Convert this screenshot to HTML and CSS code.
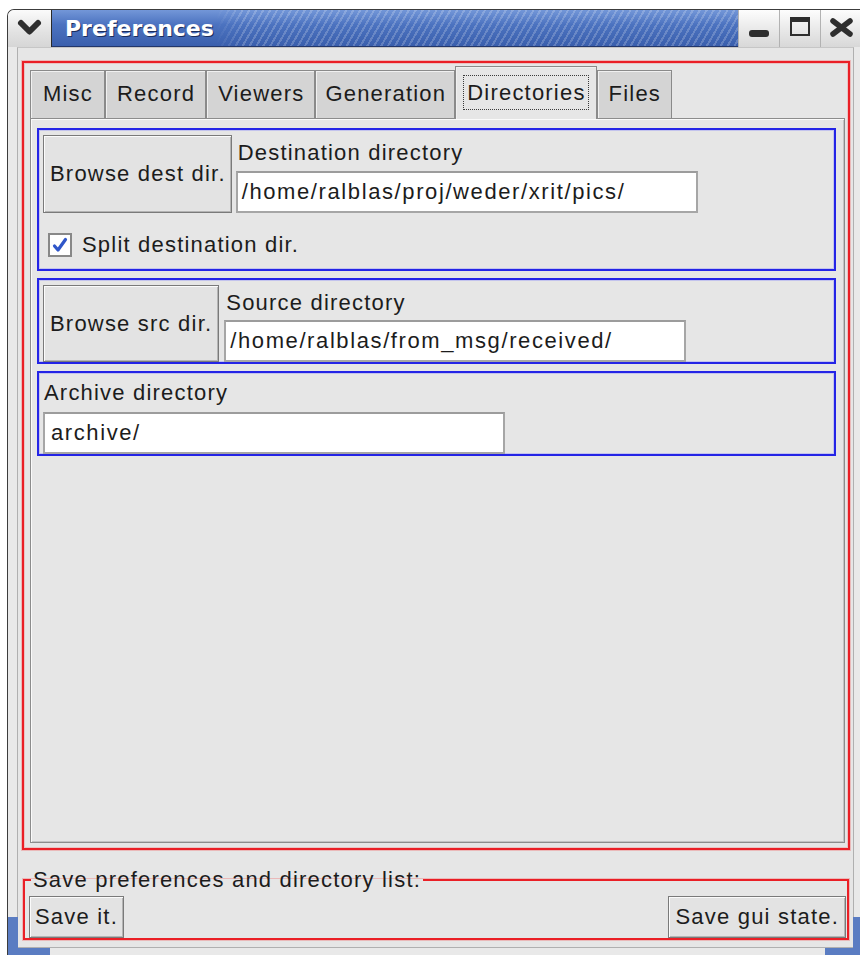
FILE: index.html
```html
<!DOCTYPE html>
<html lang="en">
<head>
<meta charset="utf-8">
<title>Preferences</title>
<link rel="stylesheet" href="styles.css">
</head>
<body>
<div class="window">
  <div class="titlebar">
    <div class="menu-btn">
      <svg width="43" height="37" viewBox="0 0 43 37"><polyline points="13,13 21.5,21.5 30,13" fill="none" stroke="#2e2e2e" stroke-width="6" stroke-linecap="round" stroke-linejoin="round"/></svg>
    </div>
    <div class="title"><span class="title-text">Preferences</span><span class="stripes"></span></div>
    <div class="wbtn">
      <svg width="40" height="37" viewBox="0 0 40 37"><rect x="10" y="20" width="20" height="7" rx="3" fill="#2e2e2e"/></svg>
    </div>
    <div class="wbtn">
      <svg width="40" height="37" viewBox="0 0 40 37"><rect x="11" y="8" width="18" height="17" fill="none" stroke="#2e2e2e" stroke-width="2"/><rect x="10" y="7" width="20" height="5" fill="#2e2e2e"/></svg>
    </div>
    <div class="wbtn">
      <svg width="40" height="37" viewBox="0 0 40 37"><path d="M12 11 L29 24 M29 11 L12 24" stroke="#2e2e2e" stroke-width="5.5" stroke-linecap="round"/></svg>
    </div>
  </div>

  <div class="frame">
    <div class="client">
      <div class="notebook">
        <div class="tabs">
          <div class="tab">Misc</div>
          <div class="tab">Record</div>
          <div class="tab">Viewers</div>
          <div class="tab tab-narrow">Generation</div>
          <div class="tab active"><span class="focus">Directories</span></div>
          <div class="tab">Files</div>
        </div>
        <div class="panel">
          <div class="group">
            <div class="row">
              <button class="btn btn-dest">Browse dest dir.</button>
              <div class="field">
                <div class="label">Destination directory</div>
                <div class="entry">/home/ralblas/proj/weder/xrit/pics/</div>
              </div>
            </div>
            <div class="check-row">
              <span class="checkbox"><svg width="20" height="20" viewBox="0 0 20 20"><path d="M4.5 11 L8 15 L15.5 4.5" fill="none" stroke="#2f56c9" stroke-width="3.2" stroke-linecap="round" stroke-linejoin="round"/></svg></span>
              <span>Split destination dir.</span>
            </div>
          </div>

          <div class="group">
            <div class="row">
              <button class="btn btn-src">Browse src dir.</button>
              <div class="field field-src">
                <div class="label">Source directory</div>
                <div class="entry">/home/ralblas/from_msg/received/</div>
              </div>
            </div>
          </div>

          <div class="group group-archive">
            <div class="label label-archive">Archive directory</div>
            <div class="entry entry-archive">archive/</div>
          </div>
        </div>
      </div>

      <fieldset class="save">
        <legend>Save preferences and directory list:</legend>
        <div class="save-buttons">
          <button class="btn btn-save">Save it.</button>
          <button class="btn btn-save btn-state">Save gui state.</button>
        </div>
      </fieldset>
    </div>
  </div>

  <span class="grip grip-left"></span>
  <span class="grip grip-right"></span>
</div>
</body>
</html>
```

FILE: styles.css
```css
html, body {
  margin: 0;
  padding: 0;
}

body {
  width: 860px;
  height: 955px;
  overflow: hidden;
  background: #ffffff;
  font-family: "Liberation Sans", Arial, sans-serif;
  font-size: 22px;
  letter-spacing: 1.2px;
  color: #1c1c1c;
}

/* window frame */
.window {
  position: relative;
  box-sizing: border-box;
  margin: 9px 0 0 7px;
  width: 870px;
  height: 946px;
  background: #e9e9e9;
  border-left: 1px solid #3c3c3c;
  border-top: 1px solid #3c3c3c;
  border-top-left-radius: 7px;
  display: flex;
  flex-direction: column;
}

.titlebar {
  display: flex;
  height: 37px;
  flex: none;
}

.menu-btn {
  width: 43px;
  background: linear-gradient(#fbfbfb, #e2e2e2 60%, #d6d6d6);
  border-right: 1px solid #2a2a2a;
  border-top-left-radius: 6px;
  display: flex;
}

.title {
  width: 686px;
  box-sizing: border-box;
  border-bottom: 1px solid #22366a;
  background: linear-gradient(#7397d8, #4c73c0 40%, #3a5fad);
  display: flex;
  align-items: center;
  color: #ffffff;
  font-family: "DejaVu Sans", sans-serif;
  font-weight: bold;
  letter-spacing: 0;
}

.title-text {
  padding-left: 13px;
  text-shadow: 1px 1px 0 #1b2d5c;
}

.stripes {
  flex: 1;
  align-self: stretch;
  margin-left: 2px;
  background: repeating-linear-gradient(120deg, rgba(255, 255, 255, 0) 0 4px, rgba(255, 255, 255, 0.2) 4px 6px);
  -webkit-mask-image: linear-gradient(to right, transparent, #000 26px);
  mask-image: linear-gradient(to right, transparent, #000 26px);
}

.wbtn {
  width: 40px;
  border-left: 1px solid #b2b2b2;
  background: linear-gradient(#fdfdfd, #e6e6e6 60%, #d8d8d8);
  display: flex;
}

.frame {
  flex: 1;
  display: flex;
  padding: 0 0 7px 9px;
}

.client {
  width: 837px;
  box-sizing: border-box;
  border: 1px solid #b0b0b0;
  border-top-color: #c6c6c6;
  background: #e6e6e6;
  display: flex;
  flex-direction: column;
}

/* red notebook frame */
.notebook {
  box-sizing: border-box;
  height: 789px;
  margin: 13px 3px 0 4px;
  border: 2px solid #ea1f26;
  box-shadow: 0 0 0 1px rgba(240, 130, 130, 0.45), inset 0 0 0 1px rgba(240, 130, 130, 0.35);
  padding: 3px 3px 5px 6px;
  display: flex;
  flex-direction: column;
}

.tabs {
  display: flex;
  align-items: flex-end;
  height: 52px;
  flex: none;
}

.tab {
  box-sizing: border-box;
  height: 48px;
  padding: 0 10px 0 11px;
  border: 1px solid #8a8a8a;
  border-bottom: none;
  background: #d4d4d4;
  box-shadow: inset 1px 1px 0 #f0f0f0;
  line-height: 46px;
  white-space: nowrap;
}

.tab:first-child {
  padding: 0 11px 0 12px;
}

.tab-narrow {
  padding: 0 8px 0 9px;
}

.tab.active {
  position: relative;
  z-index: 1;
  height: 53px;
  margin-bottom: -1px;
  padding: 0 7px 2px;
  background: #e6e6e6;
  display: flex;
  align-items: center;
}

.focus {
  border: 1px dotted #3a3a3a;
  padding: 0 2px 0 3px;
  line-height: 33px;
}

.panel {
  flex: 1;
  border: 1px solid #8c8c8c;
  background: #e6e6e6;
  box-shadow: inset 1px 1px 0 #fafafa, inset -1px -1px 0 #c4c4c4;
  padding: 9px 8px 0 6px;
}

/* blue groups */
.group {
  border: 2px solid #2424e6;
  box-shadow: inset 0 0 0 1px rgba(130, 130, 250, 0.35);
  padding: 5px 0 0 4px;
  margin-bottom: 7px;
}

.row {
  display: flex;
  gap: 4px;
}

.btn {
  font: inherit;
  letter-spacing: inherit;
  color: inherit;
  margin: 0;
  padding: 0 5px;
  background: #e3e3e3;
  border: 1px solid #7a7a7a;
  box-shadow: inset 1px 1px 0 #fbfbfb, inset -1px -1px 0 #b4b4b4;
  white-space: nowrap;
}

.btn-dest {
  padding: 0 5px 0 6px;
}

.btn-src {
  padding: 0 6px;
}

.field {
  display: flex;
  flex-direction: column;
}

.field-src {
  margin-left: 1px;
}

.field-src .label {
  height: 35px;
  line-height: 35px;
}

.label {
  height: 36px;
  line-height: 36px;
  padding-left: 2px;
  white-space: nowrap;
}

.entry {
  box-sizing: border-box;
  width: 462px;
  height: 42px;
  line-height: 38px;
  padding-left: 4px;
  background: #ffffff;
  border: 2px solid #a6a6a6;
  border-top-color: #9c9c9c;
  letter-spacing: 1.6px;
  white-space: nowrap;
}

.entry-archive {
  padding-left: 6px;
}

.check-row {
  display: flex;
  align-items: center;
  gap: 10px;
  padding: 19px 0 11px 5px;
}

.checkbox {
  box-sizing: border-box;
  width: 24px;
  height: 24px;
  border: 2px solid #888888;
  background: #ffffff;
  display: flex;
}

.group-archive {
  padding-top: 0;
}

.label-archive {
  height: 39px;
  line-height: 39px;
  padding-left: 1px;
}

/* bottom save box */
.save {
  margin: 19px 4px 0 5px;
  border: 2px solid #ea1f26;
  box-shadow: 0 0 0 1px rgba(240, 130, 130, 0.45);
  padding: 5px 1px 0 4px;
  min-width: 0;
}

.save legend {
  padding: 0 2px;
  margin-left: 2px;
  line-height: 22px;
  white-space: nowrap;
}

.save-buttons {
  display: flex;
  justify-content: space-between;
}

.btn-save {
  height: 42px;
}

.btn-state {
  padding: 0 6px;
}

/* highlighted resize corners on the frame */
.grip {
  position: absolute;
  bottom: 0;
  box-sizing: border-box;
  height: 38px;
}

.grip-left {
  left: 0;
  width: 42px;
  border-left: 10px solid #5a7cc2;
  border-bottom: 7px solid #5a7cc2;
}

.grip-right {
  left: 817px;
  width: 35px;
  border-right: 7px solid #5a7cc2;
  border-bottom: 7px solid #5a7cc2;
}
```
